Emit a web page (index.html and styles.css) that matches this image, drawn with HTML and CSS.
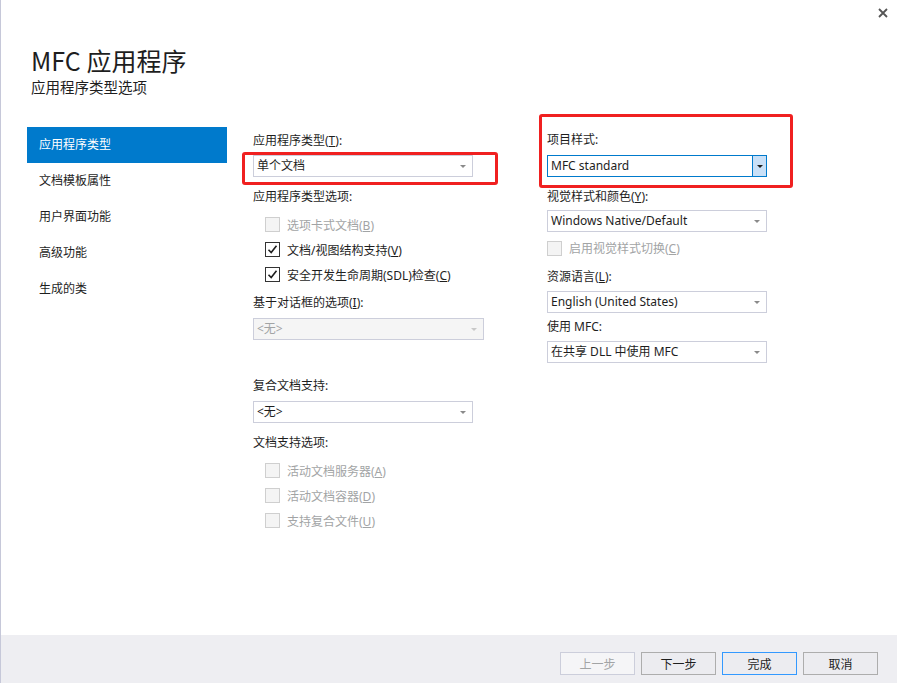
FILE: index.html
```html
<!DOCTYPE html>
<html lang="zh-CN">
<head>
<meta charset="utf-8">
<title>MFC 应用程序</title>
<link rel="stylesheet" href="styles.css">
</head>
<body>
<div class="window">
  <div class="main">
    <div class="topbar">
      <svg class="close" width="10" height="10" viewBox="0 0 10 10"><path d="M1 1 L9 9 M9 1 L1 9" stroke="#555" stroke-width="1.8" fill="none"/></svg>
    </div>
    <div class="header">
      <div class="title">MFC 应用程序</div>
      <div class="subtitle">应用程序类型选项</div>
    </div>
    <div class="content">
      <nav class="nav">
        <div class="nav-item active">应用程序类型</div>
        <div class="nav-item">文档模板属性</div>
        <div class="nav-item">用户界面功能</div>
        <div class="nav-item">高级功能</div>
        <div class="nav-item">生成的类</div>
      </nav>

      <div class="col col-mid">
        <div class="mark mark-left"></div>
        <div class="label l-first">应用程序类型(<u>T</u>):</div>
        <div class="combo w220 m5"><span>单个文档</span><span class="arrow"></span></div>
        <div class="label m11">应用程序类型选项:</div>
        <div class="checks m6">
          <div class="check indent disabled"><span class="box"></span><span>选项卡式文档(<u>B</u>)</span></div>
          <div class="check indent"><span class="box on"><svg width="11" height="11" viewBox="0 0 11 11"><path d="M1.5 5.8 L4.2 8.6 L9.5 1.8" stroke="#1e1e1e" stroke-width="1.6" fill="none"/></svg></span><span>文档/视图结构支持(<u>V</u>)</span></div>
          <div class="check indent"><span class="box on"><svg width="11" height="11" viewBox="0 0 11 11"><path d="M1.5 5.8 L4.2 8.6 L9.5 1.8" stroke="#1e1e1e" stroke-width="1.6" fill="none"/></svg></span><span>安全开发生命周期(SDL)检查(<u>C</u>)</span></div>
        </div>
        <div class="label m7">基于对话框的选项(<u>I</u>):</div>
        <div class="combo w231 m6 disabled"><span>&lt;无&gt;</span><span class="arrow"></span></div>
        <div class="label m37">复合文档支持:</div>
        <div class="combo w220 m6"><span>&lt;无&gt;</span><span class="arrow"></span></div>
        <div class="label m11">文档支持选项:</div>
        <div class="checks m6">
          <div class="check indent disabled"><span class="box"></span><span>活动文档服务器(<u>A</u>)</span></div>
          <div class="check indent disabled"><span class="box"></span><span>活动文档容器(<u>D</u>)</span></div>
          <div class="check indent disabled"><span class="box"></span><span>支持复合文件(<u>U</u>)</span></div>
        </div>
      </div>

      <div class="col col-right">
        <div class="mark mark-right"></div>
        <div class="label r-first">项目样式:</div>
        <div class="combo w220 m6 active"><span>MFC standard</span><span class="dropbtn"><span class="arrow dark"></span></span></div>
        <div class="label m11">视觉样式和颜色(<u>Y</u>):</div>
        <div class="combo w220 m4"><span>Windows Native/Default</span><span class="arrow"></span></div>
        <div class="check disabled m4 single"><span class="box"></span><span>启用视觉样式切换(<u>C</u>)</span></div>
        <div class="label m8">资源语言(<u>L</u>):</div>
        <div class="combo w220 m5"><span>English (United States)</span><span class="arrow"></span></div>
        <div class="label m5">使用 MFC:</div>
        <div class="combo w220 m5"><span>在共享 DLL 中使用 MFC</span><span class="arrow"></span></div>
      </div>
    </div>
  </div>
  <div class="footer">
    <button class="btn" disabled>上一步</button>
    <button class="btn">下一步</button>
    <button class="btn default">完成</button>
    <button class="btn">取消</button>
  </div>
</div>
</body>
</html>
```

FILE: styles.css
```css
* { box-sizing: border-box; }
html, body { margin: 0; padding: 0; }
body {
  width: 897px;
  height: 683px;
  overflow: hidden;
  font-family: "Noto Sans", "Noto Sans CJK SC", sans-serif;
  color: #1e1e1e;
  font-size: 12px;
  background: #ffffff;
}
.window {
  display: flex;
  flex-direction: column;
  height: 683px;
  border-left: 1px solid #c6c8d9;
}
.main {
  flex: 1;
  background: #ffffff;
  display: flex;
  flex-direction: column;
}
.topbar {
  height: 43px;
  display: flex;
  justify-content: flex-end;
  align-items: flex-start;
  padding: 8px 9px 0 0;
}
.close { display: block; }
.header {
  padding-left: 30px;
}
.title {
  font-family: "Noto Sans CJK SC", sans-serif;
  font-size: 25px;
  line-height: 34px;
  height: 34px;
  color: #1e1e1e;
}
.subtitle {
  font-family: "Noto Sans CJK SC", sans-serif;
  font-size: 14.5px;
  line-height: 20px;
  height: 20px;
  color: #1e1e1e;
}
.content {
  margin-top: 30px;
  padding-left: 26px;
  display: grid;
  grid-template-columns: 200px 268px 1fr;
  column-gap: 26px;
  align-items: start;
}
.nav { display: flex; flex-direction: column; }
.nav-item {
  height: 36px;
  line-height: 36px;
  padding-left: 12px;
  font-size: 12px;
  color: #1e1e1e;
}
.nav-item.active {
  background: #007acc;
  color: #ffffff;
}
.col {
  position: relative;
  display: flex;
  flex-direction: column;
  align-items: flex-start;
}
.label {
  height: 18px;
  line-height: 18px;
  font-size: 12px;
  white-space: nowrap;
}
.label u, .check u { text-decoration: underline; text-underline-offset: 1px; }
.l-first { margin-top: 5px; }
.r-first { margin-top: 4px; }
.m4 { margin-top: 4px; }
.m5 { margin-top: 5px; }
.m6 { margin-top: 6px; }
.m7 { margin-top: 7px; }
.m8 { margin-top: 8px; }
.m11 { margin-top: 11px; }
.m37 { margin-top: 37px; }

.combo {
  height: 22px;
  border: 1px solid #cccedb;
  background: #ffffff;
  display: flex;
  align-items: center;
  padding-left: 3px;
  font-size: 12px;
  line-height: 20px;
  white-space: nowrap;
}
.combo > span:first-child { flex: 1; }
.w220 { width: 220px; }
.w231 { width: 231px; }
.combo.disabled {
  background: #f5f5f5;
  border-color: #cccedb;
  color: #a2a4a5;
}
.arrow {
  width: 0;
  height: 0;
  border-left: 3px solid transparent;
  border-right: 3px solid transparent;
  border-top: 3px solid #8a8a8a;
  margin-right: 6px;
}
.combo.disabled .arrow { border-top-color: #c8c8c8; }
.combo.active { border-color: #007acc; }
.dropbtn {
  width: 14px;
  height: 20px;
  background: #c9e0f7;
  border-left: 1px solid #007acc;
  display: flex;
  align-items: center;
  justify-content: center;
}
.dropbtn .arrow { margin: 0; border-top-color: #1e1e1e; border-left-width: 3.5px; border-right-width: 3.5px; border-top-width: 3.5px; }

.checks { display: flex; flex-direction: column; }
.check {
  height: 25px;
  display: flex;
  align-items: center;
  font-size: 12px;
  white-space: nowrap;
}
.check.single { height: 24px; }
.check.indent { padding-left: 12px; }
.box {
  width: 15px;
  height: 15px;
  border: 1px solid #333333;
  background: #ffffff;
  margin-right: 7px;
  display: flex;
  align-items: center;
  justify-content: center;
  flex: none;
}
.check.disabled { color: #a2a4a5; }
.check.disabled .box {
  border-color: #cfcfcf;
  background: #f4f4f4;
}

.mark {
  position: absolute;
  border: 3px solid #f02020;
  border-radius: 3px;
  pointer-events: none;
}
.mark-left { left: -11px; top: 25px; width: 256px; height: 33px; }
.mark-right { left: -8px; top: -13px; width: 254px; height: 74px; }

.footer {
  height: 48px;
  background: #eeeef2;
  display: flex;
  justify-content: flex-end;
  align-items: flex-start;
  padding: 17px 19px 0 0;
  gap: 6px;
}
.btn {
  width: 75px;
  height: 23px;
  font-family: "Noto Sans CJK SC", sans-serif;
  font-size: 12px;
  color: #1e1e1e;
  background: #ececf0;
  border: 1px solid #adadad;
  padding: 0;
  margin: 0;
  line-height: 21px;
}
.btn:disabled {
  color: #a2a4a5;
  background: #f5f5f7;
  border-color: #cccedb;
}
.btn.default { border-color: #3399ff; }
```
